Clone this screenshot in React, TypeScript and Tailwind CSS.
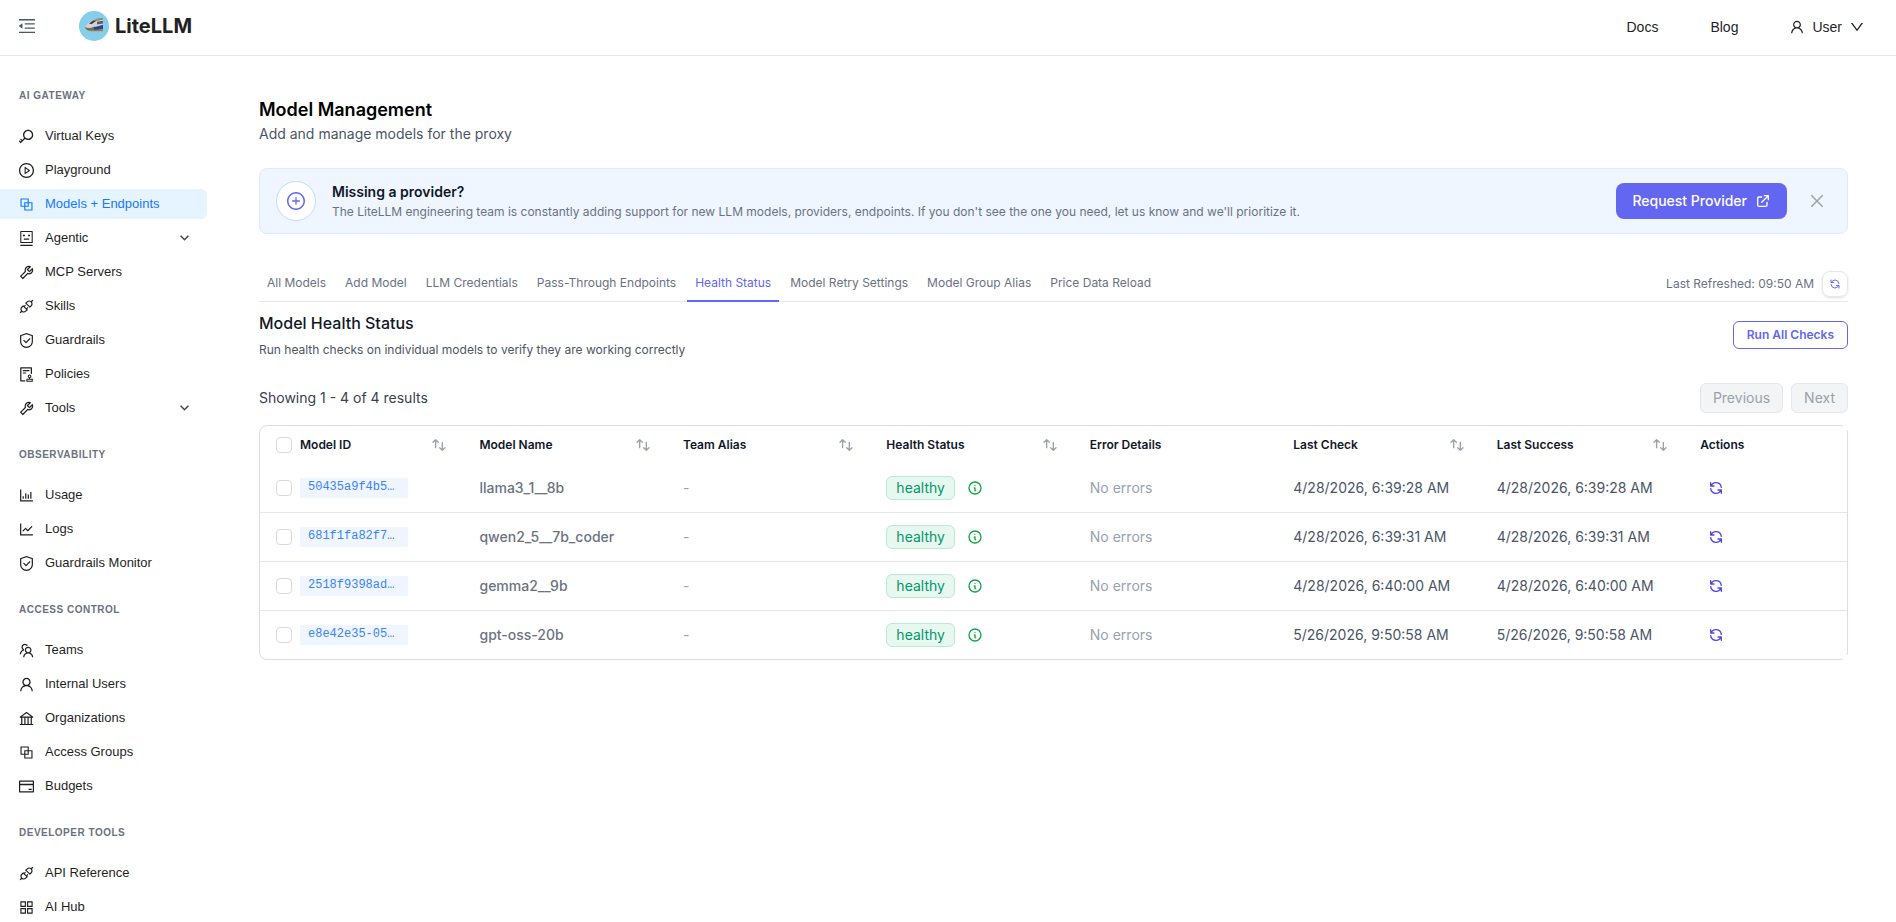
import React from "react";
import {
  AiOutlineKey, AiOutlinePlayCircle, AiOutlineBlock, AiOutlineRobot, AiOutlineTool, AiOutlineApi,
  AiOutlineSafety, AiOutlineAudit, AiOutlineBarChart, AiOutlineLineChart, AiOutlineTeam, AiOutlineUser,
  AiOutlineBank, AiOutlineCreditCard, AiOutlineAppstore, AiOutlineMenuFold, AiOutlineDown, AiOutlineClose,
  AiOutlinePlusCircle,
} from "react-icons/ai";
import { HiOutlineRefresh, HiOutlineInformationCircle, HiOutlineSwitchVertical, HiOutlineExternalLink } from "react-icons/hi";
import type { IconType } from "react-icons";

// Ant Design glyphs sit inside a 64-unit margin; this view box trims it.
const ANT_BOX = "64 64 896 896";

type Item = { label: string; icon: IconType; active?: boolean; expandable?: boolean };

const groups: { title: string; items: Item[] }[] = [
  {
    title: "AI GATEWAY",
    items: [
      { label: "Virtual Keys", icon: AiOutlineKey },
      { label: "Playground", icon: AiOutlinePlayCircle },
      { label: "Models + Endpoints", icon: AiOutlineBlock, active: true },
      { label: "Agentic", icon: AiOutlineRobot, expandable: true },
      { label: "MCP Servers", icon: AiOutlineTool },
      { label: "Skills", icon: AiOutlineApi },
      { label: "Guardrails", icon: AiOutlineSafety },
      { label: "Policies", icon: AiOutlineAudit },
      { label: "Tools", icon: AiOutlineTool, expandable: true },
    ],
  },
  {
    title: "OBSERVABILITY",
    items: [
      { label: "Usage", icon: AiOutlineBarChart },
      { label: "Logs", icon: AiOutlineLineChart },
      { label: "Guardrails Monitor", icon: AiOutlineSafety },
    ],
  },
  {
    title: "ACCESS CONTROL",
    items: [
      { label: "Teams", icon: AiOutlineTeam },
      { label: "Internal Users", icon: AiOutlineUser },
      { label: "Organizations", icon: AiOutlineBank },
      { label: "Access Groups", icon: AiOutlineBlock },
      { label: "Budgets", icon: AiOutlineCreditCard },
    ],
  },
  {
    title: "DEVELOPER TOOLS",
    items: [
      { label: "API Reference", icon: AiOutlineApi },
      { label: "AI Hub", icon: AiOutlineAppstore },
    ],
  },
];

const tabs = [
  "All Models", "Add Model", "LLM Credentials", "Pass-Through Endpoints",
  "Health Status", "Model Retry Settings", "Model Group Alias", "Price Data Reload",
];

const columns = [
  { label: "Model Name", sortable: true },
  { label: "Team Alias", sortable: true },
  { label: "Health Status", sortable: true },
  { label: "Error Details", sortable: false },
  { label: "Last Check", sortable: true },
  { label: "Last Success", sortable: true },
];

const rows = [
  { id: "50435a9f4b5", name: "llama3_1__8b", time: "4/28/2026, 6:39:28 AM" },
  { id: "681f1fa82f7", name: "qwen2_5__7b_coder", time: "4/28/2026, 6:39:31 AM" },
  { id: "2518f9398ad", name: "gemma2__9b", time: "4/28/2026, 6:40:00 AM" },
  { id: "e8e42e35-05", name: "gpt-oss-20b", time: "5/26/2026, 9:50:58 AM" },
];

function Logo() {
  return (
    <a href="#home" className="flex items-center gap-[6px]">
      <svg width="30" height="30" viewBox="0 0 30 30" aria-hidden="true">
        <circle cx="15" cy="15" r="15" fill="#87ceeb" />
        <path d="M6.200 16C8 13 12 10 16 8.300C18.500 7.200 21 6.900 24 7V20H11C8 19.800 6 18 6.200 16Z" fill="#d5d6cf" />
        <path d="M16 8.300C18.500 7.200 21 6.900 24 7V8.800L15 10.500Z" fill="#8b8d8a" />
        <path d="M10 12.500L14.500 9.300L17 10L12.500 13.200Z" fill="#3c4149" />
        <path d="M18 10.800L24 9.800V12.600L18 13.400Z" fill="#565d66" />
        <path d="M14 16C17 15.800 21 15 24 13.800V18.200L15 19.500Z" fill="#2f3f93" />
        <path d="M6.200 16C9 17.500 12 17.300 14.500 16L15 19.800H11C8 19.600 6 18 6.200 16Z" fill="#6c6f62" />
        <path d="M9 19.300L24 18.200V20.300H12Z" fill="#8d8450" />
      </svg>
      <span className="font-['Inter',sans-serif] text-xl leading-[30px] font-bold text-[#222]">LiteLLM</span>
    </a>
  );
}

function Header() {
  return (
    <header className="flex h-14 items-center border-b border-gray-200 pr-8 pb-[3px] pl-[18px] text-[#1f1f1f]">
      <button type="button" aria-label="Collapse sidebar" className="mr-[43px] text-gray-600">
        <AiOutlineMenuFold size={18} viewBox={ANT_BOX} />
      </button>
      <Logo />
      <nav className="ml-auto flex items-center pt-0.5 font-['Liberation_Sans',sans-serif] text-sm">
        <a href="#docs" className="mr-[52px]">Docs</a>
        <a href="#blog" className="mr-[52px]">Blog</a>
        <button type="button" className="flex items-center gap-2">
          <AiOutlineUser size={14} viewBox={ANT_BOX} />
          <span>User</span>
          <AiOutlineDown size={14} viewBox={ANT_BOX} />
        </button>
      </nav>
    </header>
  );
}

function Sidebar() {
  return (
    <aside className="w-[220px] shrink-0 pt-[18px] font-['Liberation_Sans',sans-serif] text-[13px] text-[#1f1f1f]">
      {groups.map((g) => (
        <section key={g.title} className="mb-2">
          <h2 className="px-[19px] pt-[14px] pb-3 text-[10px] leading-4 font-bold tracking-[0.5px] text-gray-500">
            {g.title}
          </h2>
          <ul className="pt-[3px]">
            {g.items.map((it) => (
              <li key={it.label} className="py-[2px]">
                <a
                  href={"#" + it.label.toLowerCase().replace(/[^a-z]+/g, "-")}
                  className={
                    it.active
                      ? "mr-[13px] flex h-[30px] items-center gap-[11px] rounded-r-md bg-[#e6f4ff] pr-[18px] pl-[19px] text-[#1677ff]"
                      : "mr-[13px] flex h-[30px] items-center gap-[11px] pr-[18px] pl-[19px]"
                  }
                >
                  <it.icon size={15} viewBox={ANT_BOX} />
                  <span className="flex-1">{it.label}</span>
                  {it.expandable && (
                    <svg width="9" height="9" viewBox="0 0 9 9" fill="none" stroke="#4a4a4a" strokeWidth="1.6" aria-hidden="true">
                      <path d="M0.600 1.800L4.500 5.700L8.400 1.800" />
                    </svg>
                  )}
                </a>
              </li>
            ))}
          </ul>
        </section>
      ))}
    </aside>
  );
}

function Banner() {
  return (
    <section className="flex items-center rounded-lg border border-blue-100 bg-[#eff6ff] py-3 pr-[22px] pl-4">
      <div className="mr-4 flex size-10 items-center justify-center rounded-full border border-blue-200 bg-white text-[#6366f1]">
        <AiOutlinePlusCircle size={18} viewBox={ANT_BOX} />
      </div>
      <div className="flex-1 pt-px">
        <h2 className="text-sm leading-5 font-semibold text-gray-900">Missing a provider?</h2>
        <p className="mt-px text-xs leading-[18px] text-gray-500">
          The LiteLLM engineering team is constantly adding support for new LLM models, providers, endpoints. If you don't see the one you need, let us know and we'll prioritize it.
        </p>
      </div>
      <a href="#request" className="flex h-9 items-center gap-2 rounded-lg bg-[#6366f1] px-4 text-sm font-medium text-white">
        Request Provider
        <HiOutlineExternalLink size={16} />
      </a>
      <button type="button" aria-label="Dismiss" className="ml-[22px] text-gray-400">
        <AiOutlineClose size={16} viewBox={ANT_BOX} />
      </button>
    </section>
  );
}

function Tabs() {
  return (
    <div className="mt-8 flex items-end border-b border-gray-200">
      <div role="tablist" className="flex flex-1 gap-[3px] text-xs leading-4">
        {tabs.map((t) => (
          <button
            key={t}
            type="button"
            role="tab"
            aria-selected={t === "Health Status"}
            className={
              t === "Health Status"
                ? "-mb-px border-b-2 border-[#6366f1] px-2 py-[9px] text-[#6366f1]"
                : "-mb-px border-b-2 border-transparent px-2 py-[9px] text-gray-500"
            }
          >
            {t}
          </button>
        ))}
      </div>
      <div className="mb-1 flex items-center gap-2">
        <span className="text-xs text-gray-500">Last Refreshed: 09:50 AM</span>
        <button type="button" aria-label="Refresh" className="flex size-[26px] items-center justify-center rounded-lg border border-gray-200 text-[#6366f1] shadow-sm">
          <HiOutlineRefresh size={12} />
        </button>
      </div>
    </div>
  );
}

function Check({ label }: { label: string }) {
  return <input type="checkbox" aria-label={label} className="size-4 shrink-0 appearance-none rounded-[4px] border border-[#d9d9d9] bg-white" />;
}

function HealthTable() {
  return (
    <div className="relative mt-3 rounded-lg border border-[#dbdce8]">
      <span className="absolute -top-px -right-px size-[5px] bg-white" />
      <span className="absolute -right-px -bottom-px size-[5px] bg-white" />
      <table className="w-full table-fixed border-separate border-spacing-0 text-left">
        <colgroup>
          <col className="w-[150px]" />
          {columns.map((c) => <col key={c.label} className="w-[150px]" />)}
          <col className="w-[120px]" />
        </colgroup>
        <thead className="text-xs leading-4 text-gray-900">
          <tr className="h-[38px]">
            <th scope="col" className="px-4 font-semibold">
              <div className="flex items-center gap-2">
                <Check label="Select all models" />
                <span className="flex-1">Model ID</span>
                <HiOutlineSwitchVertical size={16} className="text-gray-400" />
              </div>
            </th>
            {columns.map((c) => (
              <th key={c.label} scope="col" className="px-4 font-semibold">
                <div className="flex items-center justify-between">
                  <span>{c.label}</span>
                  {c.sortable && <HiOutlineSwitchVertical size={16} className="text-gray-400" />}
                </div>
              </th>
            ))}
            <th scope="col" className="px-4 font-semibold">Actions</th>
          </tr>
        </thead>
        <tbody className="text-sm leading-5 text-gray-600 [&>tr>td]:border-b [&>tr>td]:border-gray-200 [&>tr:last-child>td]:border-b-0">
          {rows.map((r) => (
            <tr key={r.id} className="h-[49px] last:h-12">
              <td className="px-4">
                <div className="flex items-center gap-2">
                  <Check label={"Select " + r.name} />
                  <a href={"#" + r.id} className="block h-5 w-[108px] bg-[#eff6ff] px-2 font-['Liberation_Mono',monospace] text-xs leading-[18px] text-[#3b82f6]">
                    {r.id}…
                  </a>
                </div>
              </td>
              <td className="px-4 font-medium text-gray-500">{r.name}</td>
              <td className="px-4 text-gray-400">-</td>
              <td className="px-4">
                <div className="flex items-center gap-3">
                  <span className="rounded-md border border-[#b7ebd5] bg-[#e7f8f1] px-[9px] py-px text-[#059669]">healthy</span>
                  <button type="button" aria-label="Health details" className="text-[#16a34a]">
                    <HiOutlineInformationCircle size={16} />
                  </button>
                </div>
              </td>
              <td className="px-4 text-gray-400">No errors</td>
              <td className="px-4 whitespace-nowrap">{r.time}</td>
              <td className="px-4 whitespace-nowrap">{r.time}</td>
              <td className="px-4">
                <button type="button" aria-label={"Run check for " + r.name} className="ml-2 block text-[#4f46e5]">
                  <HiOutlineRefresh size={16} />
                </button>
              </td>
            </tr>
          ))}
        </tbody>
      </table>
    </div>
  );
}

export default function App() {
  return (
    <div className="h-screen overflow-hidden bg-white font-['Inter',sans-serif] text-sm">
      <Header />
      <div className="flex">
        <Sidebar />
        <main className="min-w-0 flex-1 pt-10 pr-12 pl-[39px]">
          <h1 className="text-lg leading-7 font-semibold text-black">Model Management</h1>
          <p className="mb-6 leading-5 text-gray-600">Add and manage models for the proxy</p>
          <Banner />
          <Tabs />
          <div className="mt-2 flex items-center justify-between">
            <div>
              <h2 className="text-base leading-[26px] font-medium text-gray-900">Model Health Status</h2>
              <p className="mt-1 text-xs leading-5 text-gray-600">Run health checks on individual models to verify they are working correctly</p>
            </div>
            <button type="button" className="h-7 rounded-md border border-[#6366f1] px-[13px] text-xs font-semibold text-[#6366f1]">Run All Checks</button>
          </div>
          <div className="mt-[23px] flex items-center justify-between">
            <p className="leading-5 text-gray-700">Showing 1 - 4 of 4 results</p>
            <div className="flex gap-2">
              <button type="button" disabled className="h-[30px] rounded-md border border-gray-200 bg-gray-100 px-3 text-gray-400">Previous</button>
              <button type="button" disabled className="h-[30px] rounded-md border border-gray-200 bg-gray-100 px-3 text-gray-400">Next</button>
            </div>
          </div>
          <HealthTable />
        </main>
      </div>
    </div>
  );
}
